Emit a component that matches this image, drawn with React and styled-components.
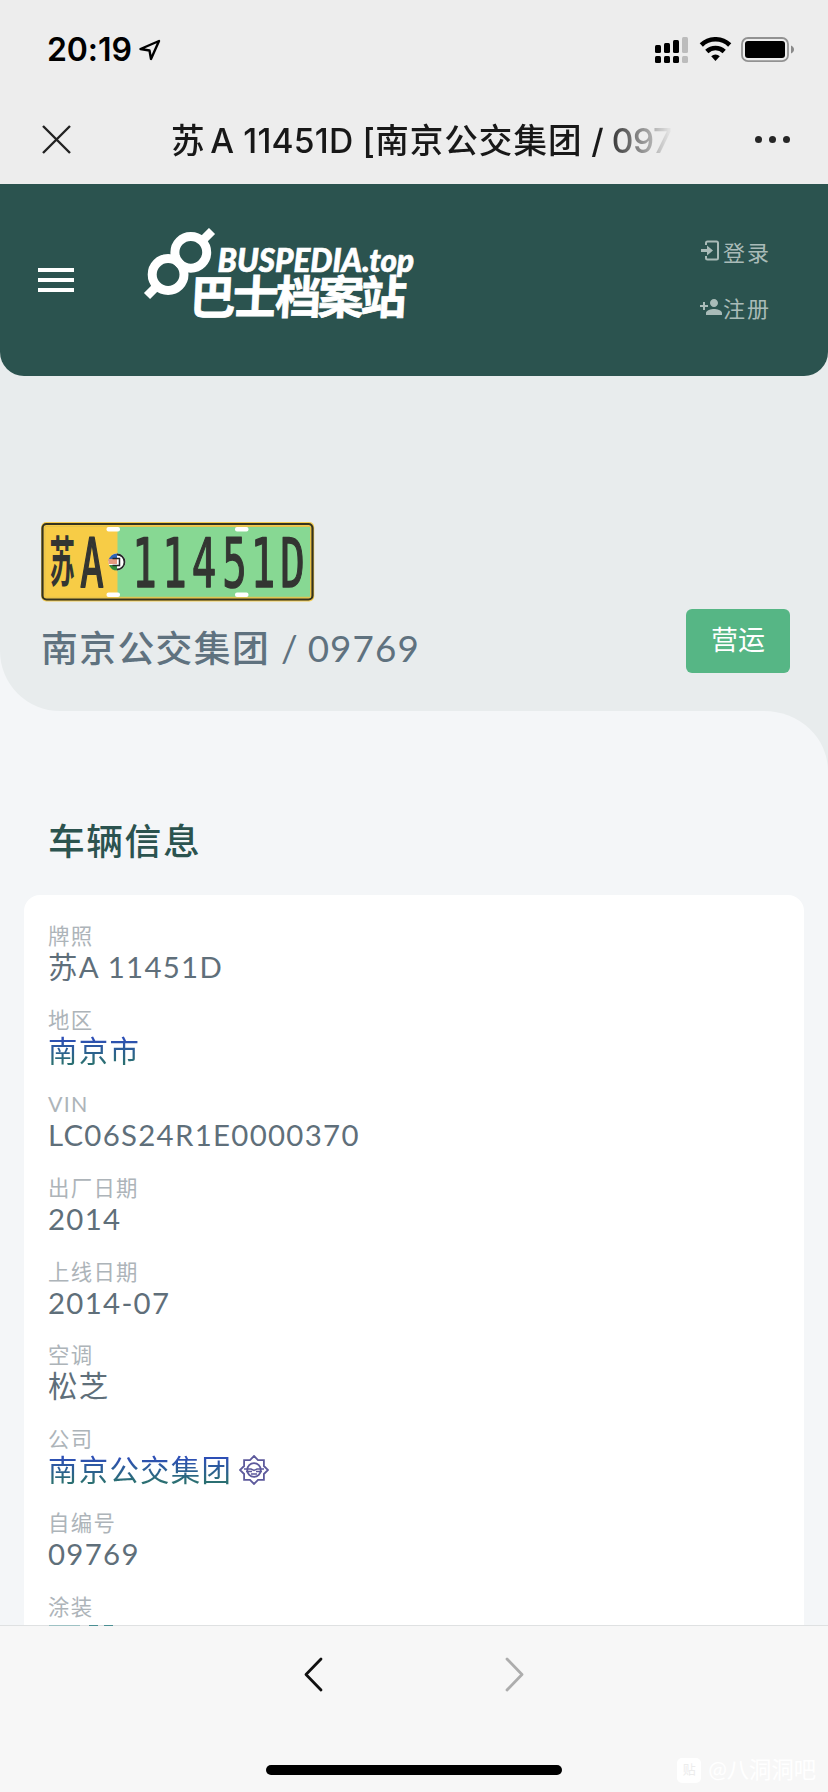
import React from "react";
import styled, { createGlobalStyle } from "styled-components";
import { MdPersonAdd } from "react-icons/md";

const GlobalStyle = createGlobalStyle`
  * { box-sizing: border-box; }
  body {
    margin: 0;
    background: #f4f6f8;
    font-family: Lato, "Noto Sans CJK SC", sans-serif;
  }
`

const Screen = styled.div`
  display: flex;
  flex-direction: column;
  width: 828px;
  height: 1792px;
  overflow: hidden;
`

/* phone chrome */
const StatusBar = styled.div`
  display: flex;
  flex: none;
  align-items: center;
  height: 94px;
  padding: 5px 34px 0 47px;
  background: #ededed;
`
const Clock = styled.span`
  width: 92px;
  font: 600 32px/40px Inter, sans-serif;
  letter-spacing: -0.1px;
  color: #000;
`
const StatusIcons = styled.svg`
  margin-left: auto;
`
const TitleBar = styled.div`
  display: flex;
  flex: none;
  align-items: center;
  height: 90px;
  padding: 0 38px 0 42px;
  background: #ededed;
`
const PageTitle = styled.div`
  width: 502px;
  margin-left: 100px;
  padding-top: 3px;
  white-space: nowrap;
  font: 500 33.6px/50px Inter, "Noto Sans CJK SC", sans-serif;
  color: #181818;
  mask-image: linear-gradient(to right, #000 430px, transparent 502px);
`
const TitlePart = styled.span`
  letter-spacing: ${props => props.spacing}px;
  margin-right: ${props => props.gap || 0}px;
`
const Dots = styled.div`
  display: flex;
  gap: 7px;
  margin-left: auto;
`
const Dot = styled.i`
  width: 7px;
  height: 7px;
  border-radius: 50%;
  background: #262626;
`

/* site header */
const HeaderBack = styled.div`
  flex: none;
  background: #e8eced;
`
const Header = styled.header`
  display: flex;
  align-items: center;
  height: 192px;
  padding: 0 57px 0 38px;
  border-radius: 0 0 24px 24px;
  background: #2b534f;
`
const Burger = styled.div`
  display: grid;
  gap: 6px;
  width: 36px;
`
const BurgerLine = styled.i`
  height: 4px;
  background: #fff;
`
const Logo = styled.svg`
  margin-left: 66px;
`
const UserLinks = styled.div`
  display: flex;
  flex-direction: column;
  gap: 24px;
  margin-left: auto;
  padding-bottom: 3px;
`
const UserLink = styled.a`
  display: flex;
  align-items: center;
  justify-content: flex-end;
  height: 32px;
  font-size: 22px;
  letter-spacing: 2px;
  color: #a9bbb8;
`

/* vehicle banner */
const BannerBack = styled.div`
  flex: none;
  background: #f4f6f8;
`
const Banner = styled.section`
  display: flex;
  justify-content: space-between;
  align-items: flex-end;
  height: 335px;
  padding: 0 38px 35px 41px;
  border-bottom-left-radius: 60px;
  background: #e8eced;
`
const Plate = styled.svg`
  display: block;
`
const Fleet = styled.h1`
  margin: 18px 0 0;
  font-size: 36.8px;
  font-weight: 500;
  line-height: 56px;
  letter-spacing: 1.4px;
  color: #5f727f;
`
const FleetNumber = styled.span`
  font-weight: 400;
  letter-spacing: 1.1px;
  word-spacing: -1.5px;
`
const Badge = styled.div`
  width: 104px;
  height: 64px;
  margin-bottom: 3px;
  border-radius: 6px;
  background: #56b685;
  color: #fff;
  font-size: 27px;
  line-height: 62px;
  text-align: center;
`

const ContentBack = styled.div`
  flex: 1;
  min-height: 0;
  overflow: hidden;
  background: #e8eced;
`
const Content = styled.main`
  height: 100%;
  padding: 0 24px;
  border-top-right-radius: 64px 60px;
  background: #f4f6f8;
`
const SectionTitle = styled.h2`
  margin: 0;
  padding: 102px 0 26px 24px;
  font-size: 36.8px;
  font-weight: 500;
  line-height: 56px;
  letter-spacing: 1.5px;
  color: #2b534f;
`
const Card = styled.div`
  height: 760px;
  padding: 28px 24px;
  border-radius: 16px;
  background: #fff;
`
const Field = styled.div`
  height: 83.9px;
`
const Label = styled.div`
  height: 26px;
  font-size: 21.4px;
  line-height: 26px;
  letter-spacing: 1.3px;
  color: #adb4b9;
`
const Value = styled.div`
  display: flex;
  align-items: center;
  height: 36px;
  font-size: 29.4px;
  line-height: 36px;
  letter-spacing: 1.3px;
  color: #5f6f7a;
`
const LinkText = styled.span`
  background: linear-gradient(#2d4fb5 18%, #2b6f72 82%);
  background-clip: text;
  color: transparent;
`
const Emblem = styled.svg`
  margin-left: 7px;
`

/* browser toolbar */
const Toolbar = styled.footer`
  position: relative;
  display: flex;
  flex: none;
  flex-direction: column;
  align-items: center;
  height: 167px;
  border-top: 1px solid #dfe1e2;
  background: #f7f7f7;
`
const Peek = styled.i`
  position: absolute;
  top: -1px;
  left: ${props => props.x}px;
  width: ${props => props.w}px;
  height: 1px;
  background: ${props => props.tone};
`
const NavRow = styled.div`
  display: flex;
  gap: 182px;
  margin-top: 31px;
`
const HomeBar = styled.div`
  width: 296px;
  height: 10px;
  margin-top: 73px;
  border-radius: 5px;
  background: #000;
`
const Watermark = styled.div`
  position: absolute;
  right: 12px;
  bottom: 7px;
  display: flex;
  align-items: center;
  gap: 7px;
  font-size: 22.3px;
  line-height: 30px;
  color: #fff;
`
const WatermarkIcon = styled.span`
  width: 24px;
  height: 25px;
  border-radius: 5px;
  background: #fff;
  color: #ececec;
  font-size: 13px;
  line-height: 23px;
  text-align: center;
`

const fields = [
  { label: "牌照", value: "苏A 11451D" },
  { label: "地区", value: "南京市", link: true },
  { label: "VIN", value: "LC06S24R1E0000370" },
  { label: "出厂日期", value: "2014" },
  { label: "上线日期", value: "2014-07" },
  { label: "空调", value: "松芝" },
  { label: "公司", value: "南京公交集团", link: true, emblem: true },
  { label: "自编号", value: "09769" },
  { label: "涂装", value: "" },
]

const plateChars = [
  { c: "1", x: 144 }, { c: "1", x: 174 }, { c: "4", x: 203.5 },
  { c: "5", x: 234 }, { c: "1", x: 262.5 }, { c: "D", x: 292 },
]

const StatusGlyphs = () => (
  <StatusIcons width="140" height="26" viewBox="654 37 140 26">
    <g fill="#000">
      <rect x="655" y="45" width="6" height="8" rx="1.5" />
      <rect x="664" y="43" width="6" height="10" rx="1.5" />
      <rect x="673" y="40" width="6" height="13" rx="1.5" />
      <rect x="655" y="56" width="6" height="7" rx="1.5" />
      <rect x="664" y="56" width="6" height="7" rx="1.5" />
      <rect x="673" y="56" width="6" height="7" rx="1.5" />
    </g>
    <g fill="#bcbcbc">
      <rect x="682" y="37" width="6" height="16" rx="1.5" />
      <rect x="682" y="56" width="6" height="7" rx="1.5" />
    </g>
    <g fill="none" stroke="#000" strokeWidth="4.6">
      <path d="M701.3 45a20.5 20.5 0 0 1 28.4 0" />
      <path d="M706.8 51.5a12.6 12.6 0 0 1 17.4 0" />
    </g>
    <path d="M711.2 56.2a6.3 6.3 0 0 1 8.6 0L715.5 61z" fill="#000" />
    <rect x="742" y="38" width="46" height="23.2" rx="6" fill="none" stroke="#929292" strokeWidth="1.8" />
    <rect x="745" y="41" width="40" height="17" rx="3" />
    <path d="M791 45.5c4 1.5 4 6.5 0 8z" fill="#8a8a8a" />
  </StatusIcons>
)

const SiteLogo = () => (
  <Logo width="276" height="104" viewBox="140 228 276 104">
    <g fill="none" stroke="#fff" strokeWidth="9">
      <circle cx="190.8" cy="252.3" r="15.9" />
      <circle cx="168.1" cy="274.5" r="15.9" />
      <path d="M203 240l9-9M156 287l-9 9" strokeWidth="8.6" />
    </g>
    <text x="217.5" y="272" fill="#fff" stroke="#fff" strokeWidth="0.7" fontFamily="Lato" fontSize="33" fontWeight="900" fontStyle="italic" textLength="196.5" lengthAdjust="spacingAndGlyphs">BUSPEDIA.top</text>
    <text transform="translate(189 313.5) skewX(-3)" fill="#fff" stroke="#fff" strokeWidth="0.8" fontFamily="Noto Sans CJK SC" fontSize="46" fontWeight="700" textLength="217" lengthAdjust="spacing">巴士档案站</text>
  </Logo>
)

const LicensePlate = () => (
  <Plate width="274" height="80" viewBox="40.5 523 274 80">
    <rect x="40.7" y="523" width="273" height="79.5" rx="5" fill="#f2ca50" />
    <path d="M44 526h73v73H44z" fill="#f7cc46" />
    <path d="M117 527h193.5v71.5H117z" fill="#87d893" />
    <rect x="42" y="525" width="270" height="75.5" rx="4" fill="none" stroke="#34331f" strokeWidth="2.2" />
    <path d="M44.5 527.5h265.5v70.8H44.5z" fill="none" stroke="#e7c24a" />
    <g fill="#fff">
      <rect x="106" y="528" width="13.5" height="4.6" rx="2" />
      <rect x="234.5" y="528" width="13.5" height="4.6" rx="2" />
      <rect x="106" y="593.5" width="13.5" height="4.6" rx="2" />
      <rect x="234.5" y="593.5" width="13.5" height="4.6" rx="2" />
    </g>
    <g fill="#333532" stroke="#333532" strokeLinejoin="round" textAnchor="middle">
      <text transform="translate(61.8 583) scale(.47 1)" fontFamily="Noto Sans CJK SC" fontSize="54" fontWeight="700" stroke="none">苏</text>
      <text transform="translate(91.3 587.5) scale(.57 1)" fontFamily="DejaVu Sans Mono" fontSize="68" strokeWidth="2">A</text>
      {plateChars.map((p, i) => (
        <text key={i} transform={`translate(${p.x} 587.5) scale(.6 1)`} fontFamily="DejaVu Sans Mono" fontSize="68" strokeWidth="1.5">{p.c}</text>
      ))}
    </g>
    <circle cx="116.5" cy="563" r="8.5" fill="#fff" />
    <path d="M116.5 554.5a8.5 8.5 0 0 0-8.5 7h14l-2-5z" fill="#2e63b5" />
    <path d="M108 560h13v5h-13z" fill="#e59a80" />
    <path d="M108.5 566a8.5 8.5 0 0 0 8 5.5l4-5.5z" fill="#348c3c" />
    <path d="M116.5 555.5a7.5 7.5 0 0 1 0 15" fill="#fff" stroke="#27282a" strokeWidth="1.8" />
    <path d="M112 559.5h7v7h-7" fill="none" stroke="#27282a" strokeWidth="1.5" />
  </Plate>
)

const CompanyEmblem = () => (
  <Emblem width="30" height="30" viewBox="-15 -15 30 30" fill="none" stroke="#5d5a9c" strokeWidth="1.8">
    <path d="M0-14L4-9.9 9.9-9.9 9.9-4 14 0 9.9 4 9.9 9.9 4 9.9 0 14-4 9.9-9.9 9.9-9.9 4-14 0-9.9-4-9.9-9.9-4-9.9z" />
    <circle r="6.8" />
    <path d="M-10-1h7l3 1.5L3-1h7M-8 1.5h6M2 1.500h6M-3 4h6" strokeWidth="1.5" />
  </Emblem>
)

const App = () => {
  return (
    <Screen>
      <GlobalStyle />
      <StatusBar>
        <Clock>20:19</Clock>
        <svg width="22" height="22" viewBox="0 0 22 22" fill="none" stroke="#000" strokeWidth="2.4" strokeLinejoin="round">
          <path d="M1.5 10L20 2 12 20 10.5 11.5z" />
        </svg>
        <StatusGlyphs />
      </StatusBar>
      <TitleBar>
        <svg width="29" height="29" viewBox="0 0 29 29" stroke="#222" strokeWidth="2.4">
          <path d="M1 1l27 27M28 1L1 28" />
        </svg>
        <PageTitle>
          <TitlePart spacing={0.6} gap={5}>苏</TitlePart>
          <TitlePart spacing={0.2}>A 11451D [</TitlePart>
          <TitlePart spacing={1}>南京公交集团</TitlePart>
          <TitlePart spacing={-0.4}> / 097</TitlePart>
        </PageTitle>
        <Dots><Dot /><Dot /><Dot /></Dots>
      </TitleBar>
      <HeaderBack>
        <Header>
          <Burger><BurgerLine /><BurgerLine /><BurgerLine /></Burger>
          <SiteLogo />
          <UserLinks>
            <UserLink>
              <svg width="22" height="22" viewBox="0 0 22 22">
                <path d="M5 5V3q0-1.5 1.5-1.5h9q1.5 0 1.5 1.5v15q0 1.5-1.5 1.5h-9Q5 19.5 5 18v-2" fill="none" stroke="currentColor" strokeWidth="2" />
                <path d="M0 9h6V5.500l6 5-6 5V12H0z" fill="currentColor" />
              </svg>
              登录
            </UserLink>
            <UserLink><MdPersonAdd size={24} />注册</UserLink>
          </UserLinks>
        </Header>
      </HeaderBack>
      <BannerBack>
        <Banner>
          <div>
            <LicensePlate />
            <Fleet>南京公交集团 <FleetNumber>/ 09769</FleetNumber></Fleet>
          </div>
          <Badge>营运</Badge>
        </Banner>
      </BannerBack>
      <ContentBack>
        <Content>
          <SectionTitle>车辆信息</SectionTitle>
          <Card>
            {fields.map(f => (
              <Field key={f.label}>
                <Label>{f.label}</Label>
                <Value>
                  {f.link ? <LinkText>{f.value}</LinkText> : f.value}
                  {f.emblem && <CompanyEmblem />}
                </Value>
              </Field>
            ))}
          </Card>
        </Content>
      </ContentBack>
      <Toolbar>
        <Peek x={49} w={31} tone="#9fc2c4" />
        <Peek x={89} w={9} tone="#4b8f93" />
        <Peek x={104} w={9} tone="#4b8f93" />
        <NavRow>
          <svg width="19" height="35" viewBox="0 0 19 35" fill="none" stroke="#111" strokeWidth="2.8" strokeLinecap="round" strokeLinejoin="round">
            <path d="M17 2L2 17.5 17 33" />
          </svg>
          <svg width="19" height="35" viewBox="0 0 19 35" fill="none" stroke="#adadad" strokeWidth="2.8" strokeLinecap="round" strokeLinejoin="round">
            <path d="M2 2l15 15.5L2 33" />
          </svg>
        </NavRow>
        <HomeBar />
        <Watermark>
          <WatermarkIcon>贴</WatermarkIcon>
          @八洞洞吧
        </Watermark>
      </Toolbar>
    </Screen>
  );
}

export default App;
